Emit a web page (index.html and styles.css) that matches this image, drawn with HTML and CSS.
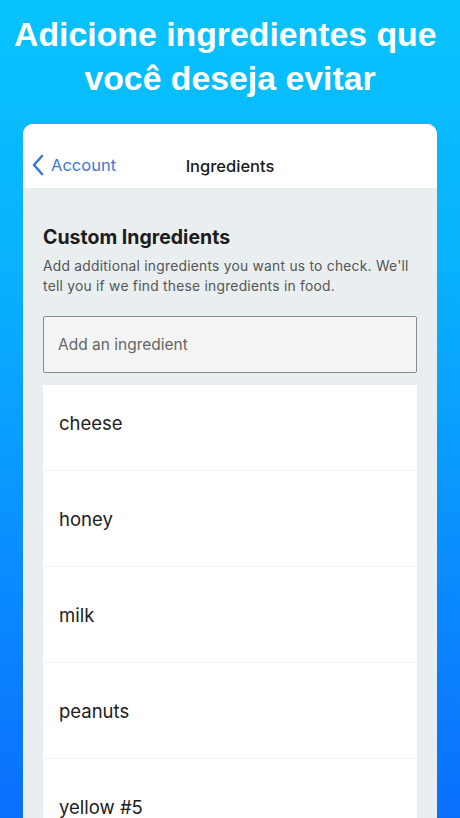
FILE: index.html
```html
<!DOCTYPE html>
<html lang="pt">
  <head>
    <meta charset="utf-8">
    <title>Ingredients</title>
    <link rel="stylesheet" href="styles.css">
  </head>
<body>

<h1 class="titulo">Adicione ingredientes que&nbsp;<br>você deseja evitar</h1>

<div class="telefone">
  <div class="nav">
    <a class="voltar" href="#">
      <svg width="14" height="22" viewBox="0 0 14 22"><path d="M11 2 L3 11 L11 20" fill="none" stroke="#3b78d6" stroke-width="2.6" stroke-linecap="round" stroke-linejoin="round"/></svg>
      Account
    </a>
    <span class="nav-titulo">Ingredients</span>
  </div>

  <div class="tresc">
    <h3>Custom Ingredients</h3>
    <p>Add additional ingredients you want us to check. We'll tell you if we find these ingredients in food.</p>
    <div class="pole">Add an ingredient</div>
    <ul class="lista">
      <li>cheese</li>
      <li>honey</li>
      <li>milk</li>
      <li>peanuts</li>
      <li>yellow #5</li>
    </ul>
  </div>
</div>

</body>
</html>
```

FILE: styles.css
```css
    html, body {
        height: 818px;
    }
    body {
        margin: 0;
        overflow: hidden;
        font-family: Inter, "Noto Sans", sans-serif;
        background: linear-gradient(to bottom, #07c3fc 0%, #08b0fd 35%, #0a8cfe 70%, #0a6ffd 100%);
    }
    .titulo {
        margin: 0;
        padding: 12px 0 0 0;
        font-family: "Liberation Sans", Arial, sans-serif;
        font-size: 33.8px;
        line-height: 44px;
        font-weight: bold;
        color: #fff;
        text-align: center;
    }
    .telefone {
        margin: 24px 23px 0 23px;
        background: #e9eef0;
        border-radius: 10px 10px 0 0;
        overflow: hidden;
        height: 700px;
    }
    .nav {
        height: 64px;
        box-sizing: border-box;
        padding-top: 19px;
        background: #fff;
        display: flex;
        align-items: center;
        justify-content: center;
        position: relative;
    }
    .nav-titulo {
        font-size: 16.5px;
        font-weight: 500;
        color: #1a1a1a;
    }
    .voltar {
        position: absolute;
        left: 8px;
        top: 30px;
        display: flex;
        align-items: center;
        gap: 6px;
        color: #3b78d6;
        font-size: 16.5px;
        text-decoration: none;
    }
    .tresc {
        padding: 37px 20px 0 20px;
    }
    .tresc h3 {
        margin: 0;
        font-size: 19.5px;
        font-weight: 700;
        color: #1c1c1c;
    }
    .tresc p {
        margin: 7px 0 0 0;
        font-size: 13.8px;
        letter-spacing: 0.25px;
        line-height: 20px;
        color: #555;
    }
    .pole {
        margin-top: 20px;
        height: 55px;
        border: 1.5px solid #8a8a8a;
        border-radius: 2px;
        background: #f4f4f4;
        padding-left: 14px;
        display: flex;
        align-items: center;
        font-size: 15.5px;
        color: #666;
    }
    .lista {
        list-style: none;
        margin: 12px 0 0 0;
        padding: 0;
        background: #fff;
    }
    .lista li {
        box-sizing: border-box;
        height: 96px;
        display: flex;
        align-items: center;
        padding-left: 16px;
        font-size: 18.5px;
        color: #202020;
        border-top: 1px solid #f1f2f3;
    }
    .lista li:first-child {
        height: 85px;
        padding-bottom: 9px;
        border-top: none;
    }
```
